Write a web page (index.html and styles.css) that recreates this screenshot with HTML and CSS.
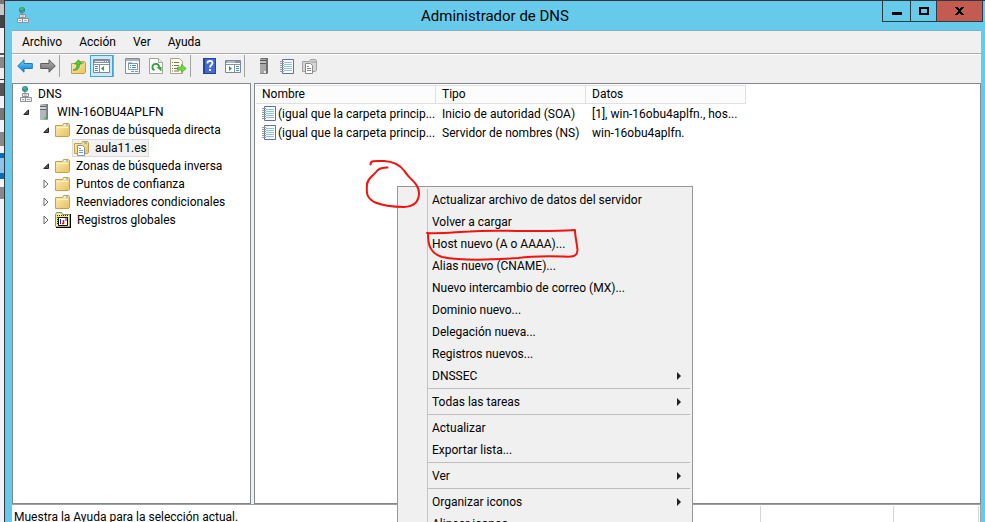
FILE: index.html
```html
<!DOCTYPE html>
<html lang="es">
<head>
<meta charset="utf-8">
<title>Administrador de DNS</title>
<link rel="stylesheet" href="styles.css">
</head>
<body>
<svg class="defs" aria-hidden="true">
  <linearGradient id="g-blue" x2="0" y2="1"><stop offset="0" stop-color="#8ad6fa"/><stop offset=".5" stop-color="#35a5ea"/><stop offset="1" stop-color="#1b7fd0"/></linearGradient>
  <linearGradient id="g-gray" x2="0" y2="1"><stop offset="0" stop-color="#b4b4b4"/><stop offset="1" stop-color="#6c6c6c"/></linearGradient>
  <linearGradient id="g-folder" x2="1" y2="1"><stop offset="0" stop-color="#fdeeb4"/><stop offset="1" stop-color="#e8c060"/></linearGradient>
  <linearGradient id="g-server" x2="1" y2="0"><stop offset="0" stop-color="#c8ccd0"/><stop offset="1" stop-color="#70767c"/></linearGradient>
  <symbol id="dns" viewBox="0 0 12 16">
    <circle cx="5" cy="3" r="3" fill="#2c7fc0"/><path d="M3 1l3-1 1 2-2 2-2-1zM5 4l2 0-1 2z" fill="#45c04a"/>
    <path d="M5 6v2" stroke="#777"/>
    <path d="M2.500 7.500h6v3h-6zM.5 11.500h5v4h-5zM5.500 11.500h6v4h-6z" fill="#eef0f2" stroke="#8d9096"/>
    <path d="M4 9h3M2 13.500h2M7 13.500h3" stroke="#a6a9ae"/>
  </symbol>
  <symbol id="server" viewBox="0 0 9 16">
    <path d="M1 1l1-1h7v15l-1 1H1z" fill="url(#g-server)"/><path d="M1 1h6v14.500H1z" fill="#b3b8bc"/>
    <path d="M1 2.500h6M1 5.500h6" stroke="#5d6369"/><path d="M1 4h6" stroke="#eef2f4"/><path d="M5 13h2v2H5z" fill="#3ddc2c"/>
  </symbol>
  <symbol id="serverg" viewBox="0 0 9 16">
    <path d="M1 1l1-1h7v15l-1 1H1z" fill="#6f6f6f"/><path d="M1 1h6v14.500H1z" fill="#a8a8a8"/>
    <path d="M1 2.500h6M1 5.500h6" stroke="#555"/><path d="M1 4h6" stroke="#ddd"/><path d="M5 13h2v2H5z" fill="#eee"/>
  </symbol>
  <symbol id="folder" viewBox="0 0 15 14">
    <path d="M.5 2.500h7l1-2h5l1 1v11l-1 1H.5z" fill="url(#g-folder)" stroke="#c8a04c"/>
    <path d="M9 2h4" stroke="#fff"/><path d="M11 2h2" stroke="#4c9be0"/><path d="M2 4.500h11" stroke="#fff3c6"/>
  </symbol>
  <symbol id="zone" viewBox="0 0 15 15">
    <path d="M.5 2.500h7l1-2h5l1 1v10l-1 1H.5z" fill="url(#g-folder)" stroke="#c8a04c"/><path d="M10 2h3" stroke="#4c9be0"/>
    <path d="M3.500 4.500h5l2 2v8h-7z" fill="#fff" stroke="#8792a0"/><path d="M5 7.500h2M5 9.500h4M5 11.500h4" stroke="#6b9cd0"/>
  </symbol>
  <symbol id="zoneg" viewBox="0 0 15 15">
    <path d="M.5 2.500h7l1-2h5l1 1v10l-1 1H.5z" fill="#d6d6d6" stroke="#a0a0a0"/><path d="M9 3h5" stroke="#999"/>
    <path d="M3.500 4.500h5l2 2v8h-7z" fill="#fff" stroke="#8a8a8a"/><path d="M5 7.500h2M5 9.500h4M5 11.500h4" stroke="#888"/>
  </symbol>
  <symbol id="logs" viewBox="0 0 16 16">
    <path d="M1 2l1-2h5l1 2h7v13H1z" fill="#f4ee98"/><path d="M.5 14.500v-12l1-2h5l1 2h7" fill="none" stroke="#888"/>
    <path d="M2 3.500h12M2 5.500h12M2 7.500h2M2 9.500h2M2 11.500h2" stroke="#222" stroke-dasharray="1 1"/>
    <path d="M15.500 2v13.500H1" fill="none" stroke="#000" stroke-width="1.500"/>
    <path d="M3.500 5.500h9v8h-9z" fill="#fff" stroke="#111"/><path d="M5.500 7v5" stroke="#22c" /><path d="M8.500 8v4M7 11.500h2" stroke="#e11" stroke-width="1.500"/><path d="M11 6v3" stroke="#22c"/>
  </symbol>
  <symbol id="book" viewBox="0 0 14 15">
    <path d="M2.500.5h11v14h-11z" fill="#fff" stroke="#5b6fae"/>
    <path d="M4 3.500h8M4 5.500h8M4 7.500h8M4 9.500h8M4 11.500h8" stroke="#8fc3d8"/>
    <path d="M0 2.500h4M0 4.500h4M0 6.500h4M0 8.500h4M0 10.500h4M0 12.500h4" stroke="#9b9b9b"/>
  </symbol>
  <symbol id="open" viewBox="0 0 6 6"><path d="M5.500.8v4.700H.8z" fill="#595959" stroke="#262626"/></symbol>
  <symbol id="shut" viewBox="0 0 6 10"><path d="M1 1l4 4-4 4z" fill="#fff" stroke="#6a6a6a"/></symbol>
  <symbol id="more" viewBox="0 0 4 8"><path d="M0 0l4 4-4 4z" fill="#222"/></symbol>
</svg>

<div class="desktop">
  <div class="behind"></div>
  <div class="window">
    <header class="titlebar">
      <svg class="app-icon" width="12" height="16"><use href="#dns"/></svg>
      <h1>Administrador de DNS</h1>
      <div class="controls">
        <button class="ctl min" aria-label="Minimizar"><svg width="10" height="3"><path d="M0 0h10v3H0z"/></svg></button>
        <button class="ctl max" aria-label="Maximizar"><svg width="10" height="8"><path d="M1 1h8v6H1z" fill="none" stroke="#000" stroke-width="2"/></svg></button>
        <button class="ctl close" aria-label="Cerrar"><svg width="9" height="8"><path d="M0 0h3v1h1v1h1V1h1V0h3v1H8v1H7v1H6v2h1v1h1v1h1v1H6V7H5V6H4v1H3v1H0V7h1V6h1V5h1V3H2V2H1V1H0z"/></svg></button>
      </div>
    </header>

    <main class="client">
      <nav class="menubar">
        <button>Archivo</button><button>Acción</button><button>Ver</button><button>Ayuda</button>
      </nav>

      <div class="toolbar" role="toolbar">
        <button aria-label="Atrás"><svg width="16" height="14"><path d="M.7 7L7 .8v3.700h8.300v5H7v3.700z" fill="url(#g-blue)" stroke="#2476b8"/></svg></button>
        <button aria-label="Adelante"><svg width="16" height="14"><path d="M15.300 7L9 .8v3.700H.7v5H9v3.700z" fill="url(#g-gray)" stroke="#5c5c5c"/></svg></button>
        <i class="sep"></i>
        <button aria-label="Subir un nivel"><svg width="15" height="15"><path d="M.5 4.500h6l1-2h6l1 1v10l-1 1H.5z" fill="url(#g-folder)" stroke="#c8a04c"/><path d="M10 4h3" stroke="#4c9be0"/><path d="M2 11c3 0 4-3 4-6H3.500L7.500.8 10.500 5H8.500c0 4-2 7-6.500 6z" fill="#54cf34" stroke="#2a9420" stroke-width=".7"/></svg></button>
        <button class="on" aria-label="Mostrar árbol"><svg width="17" height="14"><path d="M.5.5h16v13H.5z" fill="#fff" stroke="#7c8694"/><path d="M1 1h15v3H1z" fill="#8792a4"/><path d="M2 2.500h9" stroke="#d8e2ee"/><path d="M12 2.500h4" stroke="#fff" stroke-dasharray="1 1"/><path d="M1 5.500h15M6.500 6v8" stroke="#8792a4"/><path d="M2 7.500h3M2 9.500h3M2 11.500h3" stroke="#4a88c4"/><path d="M11 7v5L8 9.500z" fill="#2fa52a"/></svg></button>
        <i class="sep"></i>
        <button aria-label="Propiedades"><svg width="15" height="16"><path d="M.5.5h14v15H.5z" fill="#f8f9fa" stroke="#848b94"/><path d="M1 2h13" stroke="#a9b1bb" stroke-width="2"/><path d="M3.500 5.500h9v6h-9z" fill="#fff" stroke="#7f97b0"/><path d="M3 5h4" stroke="#6c84a0"/><path d="M5 7.500h1M7 7.500h4M5 9.500h1M7 9.500h4" stroke="#5588bb"/><path d="M6 13.500h3M10 13.500h3" stroke="#58a8d8"/></svg></button>
        <button aria-label="Actualizar"><svg width="14" height="16"><path d="M.5.5h9l4 4v11H.5z" fill="#fff" stroke="#a4a4a4"/><path d="M9.500.5v4h4" fill="#eee" stroke="#a4a4a4"/><path d="M5.500 12.200A3.300 3.300 0 1 1 10 9.500" fill="none" stroke="#36a03a" stroke-width="1.800"/><path d="M7.500 9h5v4.500z" fill="#36a03a"/></svg></button>
        <button aria-label="Exportar lista"><svg width="17" height="16"><path d="M.5.5h9l3 3v12H.5z" fill="#fffbe6" stroke="#aaa38c"/><path d="M2 4.500h1M4 4.500h5M2 7.500h1M4 7.500h5M2 10.500h1M4 10.500h4M2 13h1M4 13h5" stroke="#77736a"/><path d="M7.500 9h4V6.500l4.700 4-4.700 4V12h-4z" fill="#6cdc3c" stroke="#45a52a" stroke-width=".7"/></svg></button>
        <i class="sep"></i>
        <button aria-label="Ayuda"><svg width="13" height="16"><path d="M0 0h13v16H0z" fill="#27439e"/><path d="M2 1h10v14H2z" fill="#4169d2"/><path d="M4.500 5.500V4.500c0-1 1-1.500 2.500-1.500s2.500.8 2.500 2c0 2-2.500 2-2.500 4.500" fill="none" stroke="#fff" stroke-width="1.800"/><path d="M6 11h2v2H6z" fill="#fff"/></svg></button>
        <button aria-label="Mostrar panel de acciones"><svg width="16" height="13"><path d="M.5.5h15v12H.5z" fill="#fff" stroke="#7c8694"/><path d="M1 1h14v2H1z" fill="#8792a4"/><path d="M2 2h8" stroke="#d8e2ee"/><path d="M1 4.500h14M9.500 5v8" stroke="#8792a4"/><path d="M11 6.500h3M11 8.500h3M11 10.500h3" stroke="#4a88c4"/><path d="M4 6v5l3-2.500z" fill="#2fa52a"/></svg></button>
        <i class="sep"></i>
        <button aria-label="Servidor nuevo"><svg width="9" height="16"><use href="#serverg"/></svg></button>
        <button aria-label="Registro nuevo"><svg width="14" height="15"><use href="#book"/></svg></button>
        <button aria-label="Zona nueva"><svg width="15" height="15"><use href="#zoneg"/></svg></button>
      </div>

      <div class="panes">
        <ul class="tree">
          <li class="l0"><svg class="ico" width="12" height="16"><use href="#dns"/></svg><span>DNS</span></li>
          <li class="l1"><svg class="tw" width="6" height="6"><use href="#open"/></svg><svg class="ico" width="9" height="16"><use href="#server"/></svg><span>WIN-16OBU4APLFN</span></li>
          <li class="l2"><svg class="tw" width="6" height="6"><use href="#open"/></svg><svg class="ico" width="15" height="14"><use href="#folder"/></svg><span>Zonas de búsqueda directa</span></li>
          <li class="l3"><div class="picked"><svg class="ico" width="15" height="15"><use href="#zone"/></svg><span>aula11.es</span></div></li>
          <li class="l2"><svg class="tw" width="6" height="6"><use href="#open"/></svg><svg class="ico" width="15" height="14"><use href="#folder"/></svg><span>Zonas de búsqueda inversa</span></li>
          <li class="l2"><svg class="tw" width="6" height="10"><use href="#shut"/></svg><svg class="ico" width="15" height="14"><use href="#folder"/></svg><span>Puntos de confianza</span></li>
          <li class="l2"><svg class="tw" width="6" height="10"><use href="#shut"/></svg><svg class="ico" width="15" height="14"><use href="#folder"/></svg><span>Reenviadores condicionales</span></li>
          <li class="l2"><svg class="tw" width="6" height="10"><use href="#shut"/></svg><svg class="ico" width="16" height="16"><use href="#logs"/></svg><span>Registros globales</span></li>
        </ul>

        <section class="list">
          <table>
            <colgroup><col class="c1"><col class="c2"><col class="c3"></colgroup>
            <thead><tr><th>Nombre</th><th>Tipo</th><th>Datos</th></tr></thead>
            <tbody>
              <tr><td><div class="name"><svg width="14" height="15"><use href="#book"/></svg><span>(igual que la carpeta princip...</span></div></td><td>Inicio de autoridad (SOA)</td><td>[1], win-16obu4aplfn., hos...</td></tr>
              <tr><td><div class="name"><svg width="14" height="15"><use href="#book"/></svg><span>(igual que la carpeta princip...</span></div></td><td>Servidor de nombres (NS)</td><td>win-16obu4aplfn.</td></tr>
            </tbody>
          </table>
        </section>
      </div>

      <footer class="status"><span class="msg">Muestra la Ayuda para la selección actual.</span><span class="s1"></span><span class="s2"></span></footer>
    </main>
  </div>

  <div class="context" role="menu">
    <div class="items">
      <button role="menuitem">Actualizar archivo de datos del servidor</button>
      <button role="menuitem">Volver a cargar</button>
      <button role="menuitem">Host nuevo (A o AAAA)...</button>
      <button role="menuitem">Alias nuevo (CNAME)...</button>
      <button role="menuitem">Nuevo intercambio de correo (MX)...</button>
      <button role="menuitem">Dominio nuevo...</button>
      <button role="menuitem">Delegación nueva...</button>
      <button role="menuitem">Registros nuevos...</button>
      <button role="menuitem">DNSSEC<svg width="4" height="8"><use href="#more"/></svg></button>
      <hr>
      <button role="menuitem">Todas las tareas<svg width="4" height="8"><use href="#more"/></svg></button>
      <hr>
      <button role="menuitem">Actualizar</button>
      <button role="menuitem">Exportar lista...</button>
      <hr>
      <button role="menuitem">Ver<svg width="4" height="8"><use href="#more"/></svg></button>
      <hr>
      <button role="menuitem">Organizar iconos<svg width="4" height="8"><use href="#more"/></svg></button>
      <button role="menuitem">Alinear iconos</button>
    </div>
  </div>

  <svg class="ink" width="220" height="110" viewBox="360 155 220 110" aria-hidden="true">
    <path d="M370.500 164.500C370 160 377 161 384 161C394 161.500 400 165 404.500 171C408 178 419 183 419 193C419 202 414 206.500 404 207C391 207 381 205 374 202C366 197 366.500 193 367 184C368 178 372 177 376 172C379 168 382 168 387.500 167.500"/>
    <path d="M427 233C440 234 456 232 470 231.500C500 229 535 233 575 230C575 236 577 244 577.500 250C577 257 573 257 563 256.500C547 256 532 256 518 258C490 260 462 261 442 257C430 253 428 245 428 234"/>
  </svg>
</div>
</body>
</html>
```
FILE: styles.css
```css
* { box-sizing: border-box; }
body {
  margin: 0;
  font: 12px/18px Roboto, "Open Sans", sans-serif;
  color: #000;
  background: #fff;
}
button { font: inherit; color: inherit; background: none; border: 0; padding: 0; margin: 0; }
svg { display: block; flex: none; }
.defs { position: absolute; width: 0; height: 0; }

.desktop { position: relative; display: flex; height: 100vh; overflow: hidden; }
.behind {
  flex: none;
  width: 4px;
  background: linear-gradient(#777 0 4px, #c8c8c8 4px 15px, #444 15px 28px, #f2f4f8 28px 53px, #555 53px 55px, #eee 55px 57px, #888 57px 68px, #eee 68px 79px, #333 79px 80px, #eee 80px 83px, #555 83px 96px, #f2f4f8 96px 108px, #777 108px 120px, #f2f4f8 120px 132px, #888 132px 146px, #f2f4f8 146px 153px, #0a6cb8 153px 158px, #8cc4ec 158px 173px, #0a6cb8 173px 179px, #f2f4f8 179px 187px, #888 187px 199px, #f2f4f8 199px);
}
.window {
  flex: 1;
  min-width: 0;
  display: flex;
  flex-direction: column;
  border: solid #33373d;
  border-width: 1px 0 0 1px;
  background: #66cbea;
}

.titlebar { display: grid; grid-template-columns: 1fr auto 1fr; height: 29px; flex: none; }
.app-icon { margin: 6px 0 0 12px; }
h1 { margin: 0; font-size: 15px; line-height: 30px; font-weight: 400; }
.controls { justify-self: end; display: flex; height: 21px; margin-right: 2px; border: solid #2f3a44; border-width: 0 1px 1px; }
.ctl { display: flex; align-items: center; justify-content: center; width: 27px; }
.ctl + .ctl { border-left: 1px solid #2f3a44; }
.ctl.min { padding-top: 4px; }
.ctl.max { width: 26px; }
.ctl.close { width: 46px; background: #c35b50; }

.client { flex: 1; min-height: 0; display: flex; flex-direction: column; margin: 0 4px 0 7px; border-top: 1px solid #7fb0c8; background: #f0f0f0; }
.menubar { display: flex; gap: 17px; padding: 0 10px; height: 23px; border-bottom: 1px solid #a9abb0; }
.toolbar { display: flex; align-items: center; height: 29px; padding: 0 1px 6px; border-top: 1px solid #fff; }
.toolbar button { width: 23px; height: 22px; display: flex; align-items: center; justify-content: center; }
.toolbar .on { border: 1px solid #3aa6de; background: #cfe8f7; }
.sep { width: 8px; height: 22px; border-left: 1px solid #a2a2a2; }

.panes { flex: 1; min-height: 0; display: flex; gap: 3px; }
.tree, .list { border: 1px solid #828790; background: #fff; overflow: hidden; }
.tree { flex: 0 0 239px; margin: 0; padding: 1px 0; list-style: none; }
.tree li { display: flex; align-items: center; height: 18px; white-space: nowrap; }
.ico { margin-right: 6px; }
.tw { margin-right: 6px; }
.l0 { padding-left: 7px; }
.l1 { padding-left: 10px; }
.l1 .ico { margin: 0 9px 0 4px; }
.l2 { padding-left: 30px; }
.l3 { padding-left: 59px; }
.picked { display: flex; align-items: center; height: 18px; padding: 0 1px; border: 1px solid #dadada; background: #f2f2f2; }

.list { flex: 1; min-width: 0; padding: 1px; }
table { width: 490px; table-layout: fixed; border-collapse: separate; border-spacing: 0; }
.c1 { width: 180px; }
.c2 { width: 150px; }
th, td { padding: 0 6px; font-weight: 400; text-align: left; white-space: nowrap; }
th { height: 19px; border: solid #e0e0e0; border-width: 1px 1px 1px 0; background: #fcfcfc; line-height: 17px; }
td { height: 19px; }
td:first-child { padding-right: 0; }
.name { display: flex; align-items: center; gap: 2px; }

.status { flex: none; display: flex; height: 18px; padding: 1px 1px 0; border: solid #a0a0a0; border-width: 1px 1px 0 0; background: #fff; }
.status span { border-right: 1px solid #d7d7d7; }
.msg { flex: 1; padding: 2px 0 0 1px; white-space: nowrap; }
.s1 { width: 133px; }
.s2 { width: 85px; }

.context { position: absolute; left: 397px; top: 186px; width: 296px; padding: 2px; border: 1px solid #979797; background: #f0f0f0; }
.items { margin-left: 27px; border-left: 1px solid #c4c4c4; }
.items button { display: flex; align-items: center; justify-content: space-between; width: 100%; height: 22px; padding: 0 9px 0 4px; white-space: nowrap; }
hr { height: 1px; margin: 1px 0 2px; border: 0; background: #bdbdbd; }

.ink { position: absolute; left: 360px; top: 155px; fill: none; stroke: #f4120e; stroke-width: 2; stroke-linecap: round; stroke-linejoin: round; }
```
